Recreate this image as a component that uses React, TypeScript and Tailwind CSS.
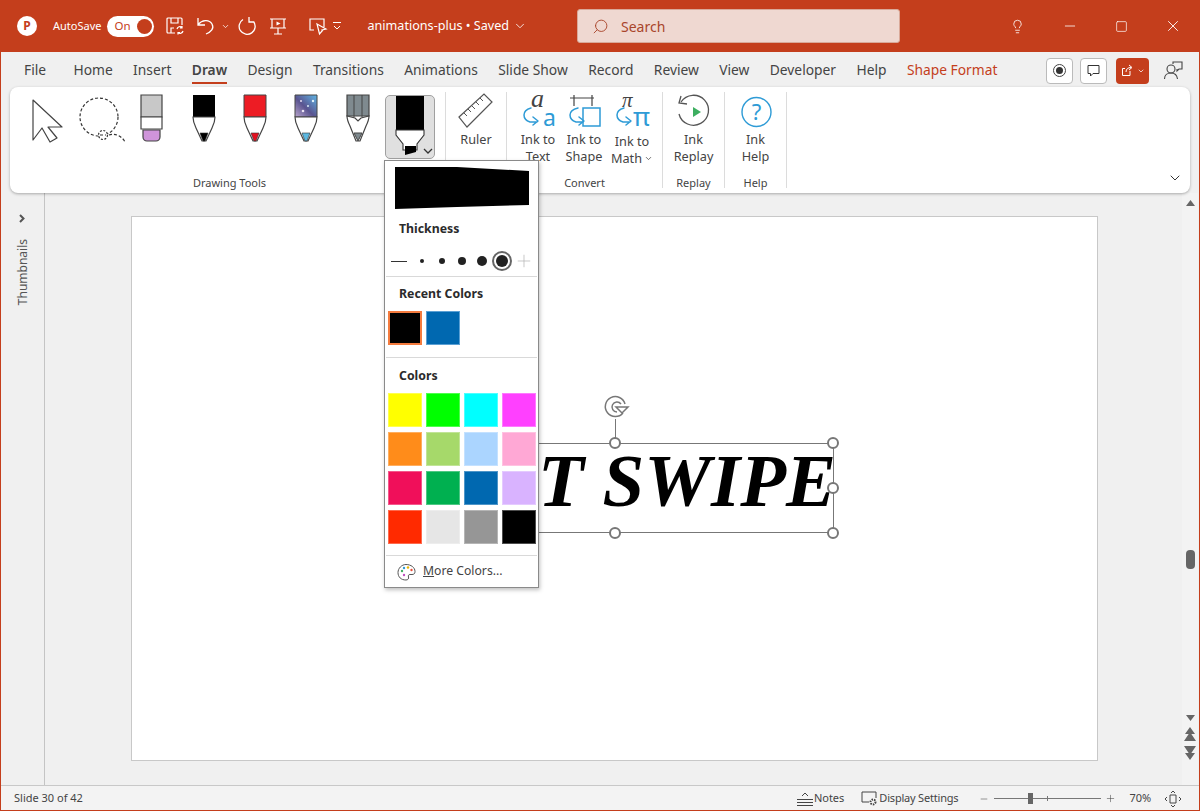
import { ChevronDown, Lightbulb, Minus, Plus, Search, Square, X } from "lucide-react";
import type { ReactNode } from "react";

const tabs = ["Home", "Insert", "Draw", "Design", "Transitions", "Animations", "Slide Show", "Record", "Review", "View", "Developer", "Help"];
const colors = [
  "bg-[#ffff00]", "bg-[#00ff00]", "bg-[#00ffff]", "bg-[#ff40ff]",
  "bg-[#ff8c1a]", "bg-[#a6d96a]", "bg-[#abd5ff]", "bg-[#ffa8d5]",
  "bg-[#f00f5a]", "bg-[#00b050]", "bg-[#0068b0]", "bg-[#d9b3ff]",
  "bg-[#ff2a00]", "bg-[#e6e6e6]", "bg-[#969696]", "bg-[#000000]",
];

// svg whose viewBox uses page coordinates, so shapes can be read off the picture
function Ico({ x, y = 95, w, h, children }: { x: number; y?: number; w: number; h: number; children: ReactNode }) {
  return (
    <svg width={w} height={h} viewBox={`${x} ${y} ${w} ${h}`} fill="none" className="block shrink-0 overflow-visible">
      {children}
    </svg>
  );
}

function Pen({ x, w, cx, fill, tip }: { x: number; w: number; cx: number; fill: ReactNode; tip: string }) {
  return (
    <Ico x={x} w={w} h={64}>
      {fill}
      <path d={`M${cx - 11} 117 q0 5 3 11 l6 13 h4 l6 -13 q3 -6 3 -11z`} fill="#fff" stroke="#444" strokeWidth="1.2" />
      <path d={`M${cx - 4} 133 h8 l-3 8 h-2z`} fill={tip} stroke="#333" strokeWidth="0.6" />
    </Ico>
  );
}

function Handle({ className }: { className: string }) {
  return <div className={`absolute w-[12px] h-[12px] rounded-full bg-white border-2 border-[#777] ${className}`} />;
}

function SmallArrow({ d }: { d: string }) {
  return <path d={d} stroke="#2e9bd6" strokeWidth="1.5" strokeLinecap="round" strokeLinejoin="round" />;
}

export default function App() {
  return (
    <div className="w-[1200px] h-[811px] flex flex-col overflow-hidden relative bg-[#f0f0f0] border-x border-b border-[#c43e1c] font-['Noto_Sans',sans-serif] text-[#444]">
      {/* Title bar */}
      <div className="h-[52px] shrink-0 bg-[#c43e1c] flex items-center text-white">
        <div className="ml-[16px] w-[20px] h-[20px] rounded-full bg-white flex items-center justify-center">
          <span className="text-[#c43e1c] text-[12px] font-bold leading-none">P</span>
        </div>
        <span className="ml-[16px] text-[11px]">AutoSave</span>
        <div className="ml-[6px] w-[47px] h-[21px] rounded-full bg-white flex items-center justify-between pl-[7px] pr-[2px]">
          <span className="text-[#c43e1c] text-[11.5px]">On</span>
          <div className="w-[15px] h-[15px] rounded-full bg-[#c43e1c]" />
        </div>
        <svg width="20" height="20" viewBox="0 0 20 20" fill="none" stroke="#fff" strokeWidth="1.2" className="ml-[11px]">
          <path d="M10 17H3a1 1 0 0 1-1-1V3a1 1 0 0 1 1-1h13a1 1 0 0 1 1 1v6" />
          <path d="M6 2v5h7V2M6 17v-5h3" />
          <path d="M12 13a3 3 0 0 1 5-1.500M18 15a3 3 0 0 1-5 1.500M17 10v2h-2M13 18.500v-2h2" />
        </svg>
        <svg width="20" height="20" viewBox="0 0 20 20" fill="none" stroke="#fff" strokeWidth="1.3" className="ml-[11px]">
          <path d="M2 2v7h7M2 8.500C6 4 13 3 16 8c2.500 4.500-1 8-6 10" />
        </svg>
        <ChevronDown size={9} strokeWidth={2} className="ml-[5px]" />
        <svg width="20" height="20" viewBox="0 0 20 20" fill="none" stroke="#fff" strokeWidth="1.3" className="ml-[8px]">
          <path d="M11 1v5h5M15.500 5.500A8 8 0 1 1 5 3.500" />
        </svg>
        <svg width="18" height="20" viewBox="0 0 18 20" fill="none" stroke="#fff" strokeWidth="1.2" className="ml-[11px]">
          <path d="M3 3h12v9H3zM1 3h16M1 12h16M9 12v6M5 18h8" />
          <path d="M7.500 5.500l4 2-4 2z" fill="#fff" stroke="none" />
        </svg>
        <svg width="20" height="20" viewBox="0 0 20 20" fill="none" stroke="#fff" strokeWidth="1.2" className="ml-[21px]">
          <path d="M6 14H2V3h14v8" />
          <path d="M9 8l9 5-4 1 .5 .5-3 3.500z" />
        </svg>
        <svg width="10" height="10" viewBox="0 0 10 10" fill="none" stroke="#fff" strokeWidth="1" className="ml-[4px]">
          <path d="M1 1.500h8M2 5l3 3 3-3" />
        </svg>
        <span className="ml-[25px] text-[12.6px]">animations-plus • Saved</span>
        <ChevronDown size={14} strokeWidth={1.4} className="ml-[4px]" />
        <div className="ml-[50px] w-[323px] h-[34px] rounded-[3px] bg-[#efd8d1] border border-[#d9a999] flex items-center pl-[14px] gap-[12px] text-[#a9452b]">
          <Search size={17} strokeWidth={1.3} className="-scale-x-100" />
          <span className="text-[14px]">Search</span>
        </div>
        <Lightbulb size={15} strokeWidth={1.3} className="ml-[110px]" />
        <Minus size={16} strokeWidth={1.2} className="ml-[37px]" />
        <Square size={13} strokeWidth={1.3} className="ml-[37px]" />
        <X size={18} strokeWidth={1.2} className="ml-[36px]" />
      </div>

      {/* Tabs */}
      <div className="h-[35px] shrink-0 flex items-center justify-between pl-[23px] pr-[16px] pt-[2px] text-[13.8px]">
        <div className="flex items-center gap-[20.4px]">
          <span className="mr-[7px]">File</span>
          {tabs.map((t) =>
            t === "Draw" ? (
              <span key={t} className="relative font-semibold">
                {t}
                <div className="absolute left-0 right-0 -bottom-[3px] h-[2px] bg-[#c43e1c]" />
              </span>
            ) : (
              <span key={t}>{t}</span>
            )
          )}
          <span className="text-[#c43e1c]">Shape Format</span>
        </div>
        <div className="flex items-center">
          <div className="w-[27px] h-[26px] rounded-[4px] bg-white border border-[#bbb] flex items-center justify-center">
            <div className="w-[13px] h-[13px] rounded-full border border-[#444] flex items-center justify-center">
              <div className="w-[7px] h-[7px] rounded-full bg-[#333]" />
            </div>
          </div>
          <div className="ml-[7px] w-[27px] h-[26px] rounded-[4px] bg-white border border-[#bbb] flex items-center justify-center">
            <svg width="13" height="13" viewBox="0 0 13 13" fill="none" stroke="#333" strokeWidth="1">
              <path d="M1 1.500h11v8H6l-2.500 2.500V9.500H1z" />
            </svg>
          </div>
          <div className="ml-[9px] w-[33px] h-[26px] rounded-[4px] bg-[#c43e1c] flex items-center justify-center gap-[3px]">
            <svg width="13" height="13" viewBox="0 0 13 13" fill="none" stroke="#fff" strokeWidth="1">
              <path d="M9 7v4.500H1.500V4.500H4M5 8c0-3 2-4.500 5-4.500M8 1l3 2.500L8 6" />
            </svg>
            <ChevronDown size={8} strokeWidth={2.2} className="text-white" />
          </div>
          <svg width="20" height="20" viewBox="0 0 20 20" fill="none" stroke="#444" strokeWidth="1.1" className="ml-[14px]">
            <circle cx="8" cy="8" r="4" />
            <path d="M1.500 18c0-4 3-6 6.500-6s6 2 6.500 6M10 3V1h9v7h-3l-2 2V8" />
          </svg>
        </div>
      </div>

      {/* Ribbon */}
      <div className="h-[106px] shrink-0 mx-[9px] rounded-[8px] bg-white shadow-[0_1px_3px_rgba(0,0,0,0.3)] flex py-[5px] relative z-10 text-[12.7px]">
        <div className="w-[436px] border-r border-[#dcdcdc] pt-[3px] flex flex-col">
          <div className="flex pl-[13px] h-[64px]">
            <Ico x={23} w={48} h={64}>
              <path d="M33 100l29 27H48l9 11-7 4-8-14-9 12z" fill="#fff" stroke="#444" strokeWidth="1.2" strokeLinejoin="round" />
            </Ico>
            <Ico x={71} w={55} h={64}>
              <circle cx="99" cy="117" r="19" stroke="#333" strokeWidth="1.2" strokeDasharray="3 2" />
              <circle cx="103" cy="135" r="4.500" fill="#fff" stroke="#333" strokeWidth="1.2" strokeDasharray="2 1.500" />
              <path d="M100 135h6M109 135c6-2 13 1 16 7" stroke="#333" strokeWidth="1.2" strokeDasharray="3 2" />
            </Ico>
            <Ico x={126} w={52} h={64}>
              <path d="M141 95h21v22h-21z" fill="#c8c8c8" stroke="#444" strokeWidth="1.200" />
              <path d="M141 117h21v12h-21z" fill="#fff" stroke="#444" strokeWidth="1.200" />
              <path d="M143 130h17v7a4 4 0 0 1-4 4h-9a4 4 0 0 1-4-4z" fill="#cf94da" stroke="#444" strokeWidth="1.200" />
            </Ico>
            <Pen x={178} w={52} cx={204} tip="#000" fill={<path d="M193 95v22h22V95z" fill="#000" />} />
            <Pen x={230} w={51} cx={255} tip="#e3101f" fill={<path d="M244 95v22h22V95z" fill="#ed1c24" stroke="#444" />} />
            <Pen
              x={281}
              w={51}
              cx={306}
              tip="#5cb8e0"
              fill={
                <g>
                  <defs>
                    <linearGradient id="galaxy" x1="0" y1="1" x2="1" y2="0">
                      <stop offset="0" stopColor="#b8a4cc" />
                      <stop offset="0.45" stopColor="#5a5490" />
                      <stop offset="1" stopColor="#5fb6e6" />
                    </linearGradient>
                  </defs>
                  <path d="M295 95v22h22V95z" fill="url(#galaxy)" stroke="#444" />
                  <circle cx="301" cy="101" r="1" fill="#e6dcf0" />
                  <circle cx="308" cy="106" r="1" fill="#d8e8f4" />
                  <circle cx="303" cy="111" r="1.300" fill="#ece4f4" />
                  <circle cx="313" cy="101" r="1.200" fill="#e0f2fa" />
                </g>
              }
            />
            <Ico x={332} w={52} h={64}>
              <path d="M347 95v21h22V95z" fill="#7f8a8f" stroke="#444" strokeWidth="1.200" />
              <path d="M354 95v22M362 95v22" stroke="#444" />
              <path d="M347 116q0 4 3 10l6 15h4l6-15q3-6 3-10l-8 2-3 3-3-3z" fill="#fff" stroke="#444" strokeWidth="1.200" />
              <path d="M354 133h8l-4 8z" fill="#7f8a8f" stroke="#444" />
            </Ico>
            <div className="ml-[1px] w-[50px] h-[64px] rounded-[5px] bg-[#e0e0e0] border border-[#a0a0a0] overflow-hidden">
              <Ico x={386} y={96} w={48} h={62}>
                <path d="M396 96h28v34h-28z" fill="#000" />
                <path d="M396 130h28v5l-7 9v6h-14v-6l-7-9z" fill="#fff" stroke="#333" strokeWidth="1.100" />
                <path d="M405 146h11v6l-11 3z" fill="#000" />
                <path d="M424 149l4 4 4-4" stroke="#333" strokeWidth="1.300" />
              </Ico>
            </div>
          </div>
          <span className="mt-auto -mb-[2px] text-center text-[11px] pl-[4px] leading-[14px]">Drawing Tools</span>
        </div>

        <div className="w-[61px] border-r border-[#dcdcdc] pt-[3px] flex flex-col items-center">
          <Ico x={446} w={60} h={34}>
            <path d="M459 117l25-23 8 8-25 25z" fill="#fff" stroke="#555" strokeWidth="1.200" />
            <path d="M464 113l3 3M468 109l3 3M472 106l3 3M476 102l3 3M480 98l3 3" stroke="#555" />
          </Ico>
          <span className="mt-[2px] leading-[17px]">Ruler</span>
        </div>

        <div className="w-[156px] border-r border-[#dcdcdc] pt-[3px] flex flex-col">
          <div className="flex pl-[8px]">
            <div className="w-[46px] flex flex-col items-center">
              <Ico x={514} w={46} h={34}>
                <text x="530" y="107" fontFamily="Liberation Serif" fontStyle="italic" fontSize="26" fill="#444">a</text>
                <text x="542" y="126" fontFamily="Noto Sans" fontSize="23" fill="#2e9bd6">a</text>
                <SmallArrow d="M530 108q-7 2-7 7t6 7h7M532 117l5 4-5 4" />
              </Ico>
              <span className="mt-[2px] leading-[17px] text-center">Ink to Text</span>
            </div>
            <div className="w-[46px] flex flex-col items-center">
              <Ico x={560} w={46} h={34}>
                <path d="M569 98h24M573 95v11M591 95v11" stroke="#444" strokeWidth="1.200" />
                <path d="M582 108h17v18h-17z" fill="#fff" stroke="#2e9bd6" strokeWidth="1.500" />
                <SmallArrow d="M577 108q-8 2-8 7t6 7h7M578 117l5 4-5 4" />
              </Ico>
              <span className="mt-[2px] leading-[17px] text-center">Ink to Shape</span>
            </div>
            <div className="w-[50px] flex flex-col items-center">
              <Ico x={606} w={50} h={34}>
                <text x="621" y="107" fontFamily="Liberation Serif" fontStyle="italic" fontSize="21" fill="#444">π</text>
                <text x="632" y="126" fontFamily="Noto Sans" fontSize="26" fill="#2e9bd6">π</text>
                <SmallArrow d="M623 108q-7 2-7 7t6 7h7M625 117l5 4-5 4" />
              </Ico>
              <span className="mt-[4px] leading-[17px] text-center flex flex-col items-center">
                <span>Ink to</span>
                <span className="flex items-center gap-[2px]">
                  Math
                  <ChevronDown size={9} strokeWidth={2} />
                </span>
              </span>
            </div>
          </div>
          <span className="mt-auto -mb-[2px] text-center text-[11px] leading-[14px]">Convert</span>
        </div>

        <div className="w-[62px] border-r border-[#dcdcdc] pt-[3px] flex flex-col items-center">
          <Ico x={662} w={61} h={34}>
            <path d="M680 102a15 15 0 1 1-2 12" stroke="#555" strokeWidth="1.300" />
            <path d="M680 96l-2 7 8 1" stroke="#555" strokeWidth="1.300" />
            <path d="M692 107l8 5-8 5z" fill="#3dae60" />
          </Ico>
          <span className="mt-[2px] leading-[17px] text-center">Ink Replay</span>
          <span className="mt-auto -mb-[2px] text-[11px] leading-[14px]">Replay</span>
        </div>

        <div className="w-[62px] border-r border-[#dcdcdc] pt-[3px] flex flex-col items-center">
          <Ico x={724} w={61} h={34}>
            <circle cx="755.500" cy="112" r="14.500" stroke="#2e9bd6" strokeWidth="1.400" />
            <text x="755.500" y="120" textAnchor="middle" fontFamily="Noto Sans" fontSize="22" fill="#2e9bd6">?</text>
          </Ico>
          <span className="mt-[2px] leading-[17px] text-center w-[30px]">Ink Help</span>
          <span className="mt-auto -mb-[2px] text-[11px] leading-[14px]">Help</span>
        </div>

        <ChevronDown size={16} strokeWidth={1.5} className="absolute right-[7px] bottom-[7px] text-[#333]" />
      </div>

      {/* Workspace */}
      <div className="flex-1 flex min-h-0">
        <div className="w-[44px] shrink-0 border-r border-[#c4c4c4] flex flex-col items-center pt-[21px]">
          <svg width="7" height="9" viewBox="0 0 7 9" fill="none" stroke="#555" strokeWidth="2">
            <path d="M1 1l3.500 3.500L1 8" />
          </svg>
          <span className="mt-[16px] text-[12px] [writing-mode:vertical-rl] rotate-180 text-[#555]">Thumbnails</span>
        </div>
        <div className="flex-1 pl-[86px] pt-[23px]">
          <div className="w-[967px] h-[545px] bg-white border border-[#c8c8c8] relative">
            <span className="absolute left-[406px] top-[219px] text-[75px] leading-[90px] italic font-bold whitespace-nowrap text-black font-['Liberation_Serif',serif]">
              T SWIPE
            </span>
            <div className="absolute left-[400px] top-[226px] w-[302px] h-[90px] border border-[#777]" />
            <div className="absolute left-[483px] top-[202px] w-[1px] h-[25px] bg-[#777]" />
            <svg width="28" height="26" viewBox="0 0 28 26" fill="none" stroke="#777" strokeWidth="1.500" className="absolute left-[471px] top-[177px]">
              <path d="M20 19a10 10 0 1 1 2-9M14 18a5 5 0 1 1 4-8" />
              <path d="M13 13h12l-6 6z" fill="#fff" />
            </svg>
            <Handle className="left-[477px] top-[220px]" />
            <Handle className="left-[695px] top-[220px]" />
            <Handle className="left-[695px] top-[265px]" />
            <Handle className="left-[477px] top-[310px]" />
            <Handle className="left-[695px] top-[310px]" />
          </div>
        </div>
        <div className="w-[16px] shrink-0 mr-[1px] bg-[#f3f3f3] flex flex-col items-center pt-[6px] pb-[25px]">
          <svg width="11" height="8" viewBox="0 0 11 8" fill="#666"><path d="M5.500 1L10 7H1z" /></svg>
          <div className="mt-[343px] w-[9px] h-[19px] rounded-[4px] bg-[#666]" />
          <div className="mt-auto flex flex-col items-center gap-[5px]">
            <svg width="11" height="8" viewBox="0 0 11 8" fill="#666"><path d="M5.500 7L10 1H1z" /></svg>
            <svg width="12" height="14" viewBox="0 0 12 14" fill="#666"><path d="M6 0L11 7H1zM6 5L12 14H0z" /></svg>
            <svg width="12" height="14" viewBox="0 0 12 14" fill="#666"><path d="M6 14L11 7H1zM6 9L12 0H0z" /></svg>
          </div>
        </div>
      </div>

      {/* Status bar */}
      <div className="h-[25px] shrink-0 border-t border-[#c8c8c8] bg-[#f3f3f3] flex items-center text-[11px] pl-[13px] pt-[1px]">
        <span>Slide 30 of 42</span>
        <svg width="18" height="16" viewBox="0 0 18 16" fill="none" stroke="#444" strokeWidth="1" className="ml-[713px]">
          <path d="M1 8.500h16M1 11.500h16M1 14.500h16M6 5l3-3 3 3" />
        </svg>
        <span>Notes</span>
        <svg width="17" height="15" viewBox="0 0 17 15" fill="none" stroke="#444" strokeWidth="1" className="ml-[17px]">
          <path d="M8 11H1V1h14v6" />
          <circle cx="12" cy="11" r="2.500" strokeWidth="2" strokeDasharray="1.500 1" />
        </svg>
        <span className="ml-[1px] tracking-[-0.2px]">Display Settings</span>
        <Minus size={10} strokeWidth={1.3} className="ml-[21px]" />
        <div className="ml-[5px] w-[107px] h-[1px] bg-[#777] relative">
          <div className="absolute left-[34px] -top-[5px] w-[5px] h-[11px] bg-[#666]" />
          <div className="absolute left-[53px] -top-[2px] w-[1px] h-[5px] bg-[#777]" />
        </div>
        <Plus size={11} strokeWidth={1.2} className="ml-[4px]" />
        <span className="ml-[13px]">70%</span>
        <svg width="18" height="18" viewBox="0 0 18 18" fill="none" stroke="#444" strokeWidth="1" className="ml-[13px]">
          <path d="M6 5h6v8H6zM3 7l-2 2 2 2M15 7l2 2-2 2M7 3l2-2 2 2M7 15l2 2 2-2" />
        </svg>
      </div>

      {/* Pen dropdown */}
      <div className="absolute left-[383px] top-[160px] w-[155px] h-[428px] z-20 bg-white border border-[#8a8a8a] shadow-[1px_2px_4px_rgba(0,0,0,0.25)] flex flex-col">
        <svg width="134" height="42" viewBox="0 0 134 42" className="ml-[10px] mt-[6px]">
          <path d="M0 0h62l72 4v34l-72 2-62 2z" fill="#000" />
        </svg>
        <span className="mt-[11px] ml-[14px] text-[12.3px] font-bold leading-[18px] text-[#2b2b2b]">Thickness</span>
        <div className="mt-[11px] h-[24px] flex items-center pl-[6px]">
          <div className="w-[16px] h-[1px] bg-[#333]" />
          <div className="ml-[13px] w-[4px] h-[4px] rounded-full bg-[#222]" />
          <div className="ml-[15px] w-[6px] h-[6px] rounded-full bg-[#222]" />
          <div className="ml-[13px] w-[8px] h-[8px] rounded-full bg-[#222]" />
          <div className="ml-[11px] w-[10px] h-[10px] rounded-full bg-[#222]" />
          <div className="ml-[5px] w-[20px] h-[20px] rounded-full border-2 border-[#666] flex items-center justify-center">
            <div className="w-[12px] h-[12px] rounded-full bg-[#222]" />
          </div>
          <Plus size={20} strokeWidth={0.9} className="ml-[2px] text-[#b5b5b5]" />
        </div>
        <div className="mt-[3px] mx-[1px] h-[1px] bg-[#d9d9d9]" />
        <span className="mt-[8px] ml-[14px] text-[12.3px] font-bold leading-[18px] text-[#2b2b2b]">Recent Colors</span>
        <div className="mt-[8px] ml-[3px] flex gap-[4px]">
          <div className="w-[34px] h-[34px] bg-black border-2 border-[#f47b3e]" />
          <div className="w-[34px] h-[34px] bg-[#0068b0] border border-[#5ba0d4]" />
        </div>
        <div className="mt-[12px] mx-[1px] h-[1px] bg-[#d9d9d9]" />
        <span className="mt-[9px] ml-[14px] text-[12.3px] font-bold leading-[18px] text-[#2b2b2b]">Colors</span>
        <div className="mt-[8px] ml-[3px] grid grid-cols-[repeat(4,34px)] grid-rows-[repeat(4,34px)] gap-x-[4px] gap-y-[5px]">
          {colors.map((c) => (
            <div key={c} className={`${c} shadow-[inset_0_0_0_1px_rgba(255,255,255,0.3)]`} />
          ))}
        </div>
        <div className="mt-[11px] mx-[1px] h-[1px] bg-[#d9d9d9]" />
        <div className="flex-1 flex items-center pl-[12px]">
          <svg width="19" height="18" viewBox="0 0 19 18" fill="none" className="shrink-0">
            <path d="M9 1.500c5 0 9 3 9 7 0 2-1 3-3 3h-2c-1.500 0-2 1-1.500 2.500s-.5 3-2.500 3c-5 0-8-3-8-7.500 0-4 3.500-8 8-8z" stroke="#555" />
            <circle cx="5" cy="8" r="1.200" fill="#3dae60" />
            <circle cx="7" cy="5" r="1.200" fill="#2e9bd6" />
            <circle cx="11" cy="4.500" r="1.200" fill="#e8b500" />
            <circle cx="14.500" cy="7" r="1.200" fill="#e8503a" />
            <circle cx="7" cy="12" r="1.200" fill="#c050c0" />
          </svg>
          <span className="ml-[7px] text-[12.2px]"><span className="underline">M</span>ore Colors...</span>
        </div>
      </div>
    </div>
  );
}
